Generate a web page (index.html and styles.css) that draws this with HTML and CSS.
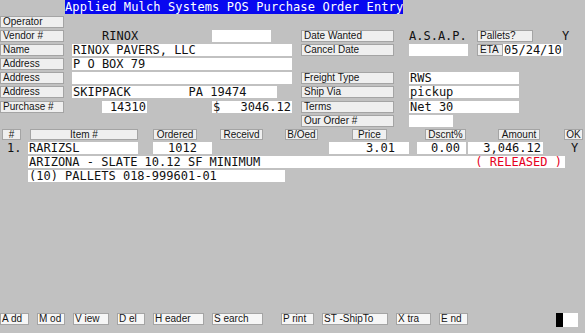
FILE: index.html
```html
<!DOCTYPE html>
<html lang="en">
<head>
  <meta charset="UTF-8">
  <title>Applied Mulch Systems POS Purchase Order Entry</title>
  <link rel="stylesheet" href="styles.css">
</head>
<body>
  <div class="screen">
    <div class="title">Applied Mulch Systems POS Purchase Order Entry</div>

    <div class="form">
      <div class="row">
        <div class="left"><div class="lbl">Operator</div></div>
      </div>
      <div class="row">
        <div class="left">
          <div class="lbl">Vendor #</div>
          <div class="val vcode">RINOX</div>
          <div class="box vbox"></div>
        </div>
        <div class="right">
          <div class="lbl wide">Date Wanted</div>
          <div class="val asap">A.S.A.P.</div>
          <div class="lbl pallets">Pallets?</div>
          <div class="val pyes">Y</div>
        </div>
      </div>
      <div class="row">
        <div class="left">
          <div class="lbl">Name</div>
          <div class="box full">RINOX PAVERS, LLC</div>
        </div>
        <div class="right">
          <div class="lbl wide">Cancel Date</div>
          <div class="box cancel"></div>
          <div class="lbl eta">ETA</div>
          <div class="box eta-val">05/24/10</div>
        </div>
      </div>
      <div class="row">
        <div class="left">
          <div class="lbl">Address</div>
          <div class="box full">P O BOX 79</div>
        </div>
      </div>
      <div class="row">
        <div class="left">
          <div class="lbl">Address</div>
          <div class="box full"></div>
        </div>
        <div class="right">
          <div class="lbl wide">Freight Type</div>
          <div class="box ship">RWS</div>
        </div>
      </div>
      <div class="row">
        <div class="left">
          <div class="lbl">Address</div>
          <div class="box city">SKIPPACK        PA 19474</div>
        </div>
        <div class="right">
          <div class="lbl wide">Ship Via</div>
          <div class="box ship">pickup</div>
        </div>
      </div>
      <div class="row">
        <div class="left">
          <div class="lbl">Purchase #</div>
          <div class="box po-num">14310</div>
          <div class="box po-total"><span>$</span><span>3046.12</span></div>
        </div>
        <div class="right">
          <div class="lbl wide">Terms</div>
          <div class="box ship">Net 30</div>
        </div>
      </div>
      <div class="row">
        <div class="left"></div>
        <div class="right">
          <div class="lbl wide">Our Order #</div>
          <div class="box our"></div>
        </div>
      </div>

      <div class="row ihead">
        <div class="hl c-no">#</div>
        <div class="hl c-item">Item #</div>
        <div class="hl c-ord">Ordered</div>
        <div class="hl c-rec">Receivd</div>
        <div class="hl c-bo">B/Oed</div>
        <div class="hl c-price">Price</div>
        <div class="hl c-disc">Dscnt%</div>
        <div class="hl c-amt">Amount</div>
        <div class="hl c-ok">OK</div>
      </div>
      <div class="row">
        <div class="val line-no">1.</div>
        <div class="box d-item">RARIZSL</div>
        <div class="box d-ord">1012</div>
        <div class="box d-price">3.01</div>
        <div class="box d-disc">0.00</div>
        <div class="box d-amt">3,046.12</div>
        <div class="val d-ok">Y</div>
      </div>
      <div class="row">
        <div class="box desc">ARIZONA - SLATE 10.12 SF MINIMUM<span class="status">( RELEASED )</span></div>
      </div>
      <div class="row">
        <div class="box desc2">(10) PALLETS 018-999601-01</div>
      </div>
    </div>

    <div class="keys">
      <div class="key k-add">A dd</div>
      <div class="key k-mod">M od</div>
      <div class="key k-view">V iew</div>
      <div class="key k-del">D el</div>
      <div class="key k-head">H eader</div>
      <div class="key k-search">S earch</div>
      <div class="key k-print">P rint</div>
      <div class="key k-ship">ST -ShipTo</div>
      <div class="key k-xtra">X tra</div>
      <div class="key k-end">E nd</div>
      <div class="indicator"><span class="ind-on"></span><span class="ind-off"></span></div>
    </div>
  </div>
</body>
</html>
```

FILE: styles.css
```css
* {
  margin: 0;
  padding: 0;
  box-sizing: border-box;
}

body {
  background: #c1c1c1;
  font-family: 'DejaVu Sans Mono', monospace;
  overflow: hidden;
}

.screen {
  display: flex;
  flex-direction: column;
  width: 585px;
  height: 333px;
}

.title {
  align-self: flex-start;
  margin-left: 65px;
  width: 338px;
  height: 14px;
  background: #0808f0;
  color: #fff;
  font-size: 12px;
  line-height: 14px;
  letter-spacing: 0.13px;
  white-space: pre;
}

.form {
  display: flex;
  flex-direction: column;
  gap: 2.1px;
  margin-top: 2px;
}

.row {
  display: flex;
  height: 12px;
}

.left {
  display: flex;
  width: 301px;
}

.right {
  display: flex;
}

/* field labels */
.lbl,
.hl,
.key {
  font-family: 'Liberation Sans', Arial, sans-serif;
  font-size: 10px;
  color: #151515;
  background: #efefef;
  border: 1px solid #a4a4a4;
  white-space: pre;
}

.lbl {
  width: 64px;
  height: 12px;
  margin-right: 8px;
  padding-left: 2px;
  line-height: 10px;
}

.lbl.wide {
  width: 93px;
  margin-right: 15px;
}

.lbl.pallets {
  width: 56px;
  margin-right: 0;
}

.lbl.eta {
  width: 26px;
  margin-left: 9px;
  margin-right: 0;
}

/* values */
.val,
.box {
  height: 12px;
  font-size: 12px;
  line-height: 12px;
  color: #111;
  white-space: pre;
}

.box {
  background: #fff;
  padding: 0 1px;
}

.vcode {
  width: 140px;
  padding-left: 30px;
}

.vbox { width: 59px; }
.full { width: 220px; }
.city { width: 205px; }

.po-num {
  width: 45px;
  margin-left: 30px;
  text-align: right;
}

.po-total {
  display: flex;
  justify-content: space-between;
  width: 80px;
  margin-left: 65px;
}

.asap { width: 68px; }

.pyes { padding-left: 29px; }

.cancel { width: 59px; }

.eta-val { width: 60px; }

.ship { width: 110px; }

.our { width: 44px; }

/* line item table */
.ihead {
  height: 11px;
}

.hl {
  height: 11px;
  line-height: 9px;
  text-align: center;
}

.c-no { width: 19px; margin-left: 2px; }
.c-item { width: 108px; margin-left: 9px; }
.c-ord { width: 44px; margin-left: 15px; }
.c-rec { width: 43px; margin-left: 23px; }
.c-bo { width: 33px; margin-left: 22px; }
.c-price { width: 35px; margin-left: 34px; }
.c-disc { width: 41px; margin-left: 38px; }
.c-amt { width: 42px; margin-left: 32px; }
.c-ok { width: 19px; margin-left: 24px; }

.line-no {
  width: 28px;
  padding-left: 7px;
}

.d-item { width: 110px; }

.d-ord {
  width: 59px;
  margin-left: 15px;
  text-align: center;
}

.d-price {
  width: 80px;
  margin-left: 117px;
  padding-right: 14px;
  text-align: right;
}

.d-disc {
  width: 49px;
  margin-left: 8px;
  padding-right: 6px;
  text-align: right;
}

.d-amt {
  width: 75px;
  margin-left: 2px;
  padding-right: 2px;
  text-align: right;
}

.d-ok { margin-left: 28px; }

.desc {
  display: flex;
  width: 537px;
  margin-left: 28px;
}

.status {
  margin-left: auto;
  padding-right: 2px;
  color: #e6001e;
}

.desc2 {
  width: 257px;
  margin-left: 28px;
}

/* function keys */
.keys {
  display: flex;
  align-items: flex-start;
  gap: 8px;
  margin-top: auto;
  margin-bottom: 6px;
}

.key {
  height: 12px;
  padding-left: 1px;
  line-height: 10px;
  background: #f6f6f6;
}

.k-add { width: 29px; }
.k-mod { width: 28px; }
.k-view { width: 36px; }
.k-del { width: 28px; }
.k-head { width: 51px; }
.k-search { width: 51px; }
.k-print { width: 33px; margin-left: 10px; }
.k-ship { width: 66px; }
.k-xtra { width: 35px; }
.k-end { width: 29px; }

.indicator {
  display: flex;
  height: 14px;
  margin-left: auto;
  margin-right: 7px;
}

.ind-on {
  width: 7px;
  background: #000;
}

.ind-off {
  width: 15px;
  background: #fff;
}
```
